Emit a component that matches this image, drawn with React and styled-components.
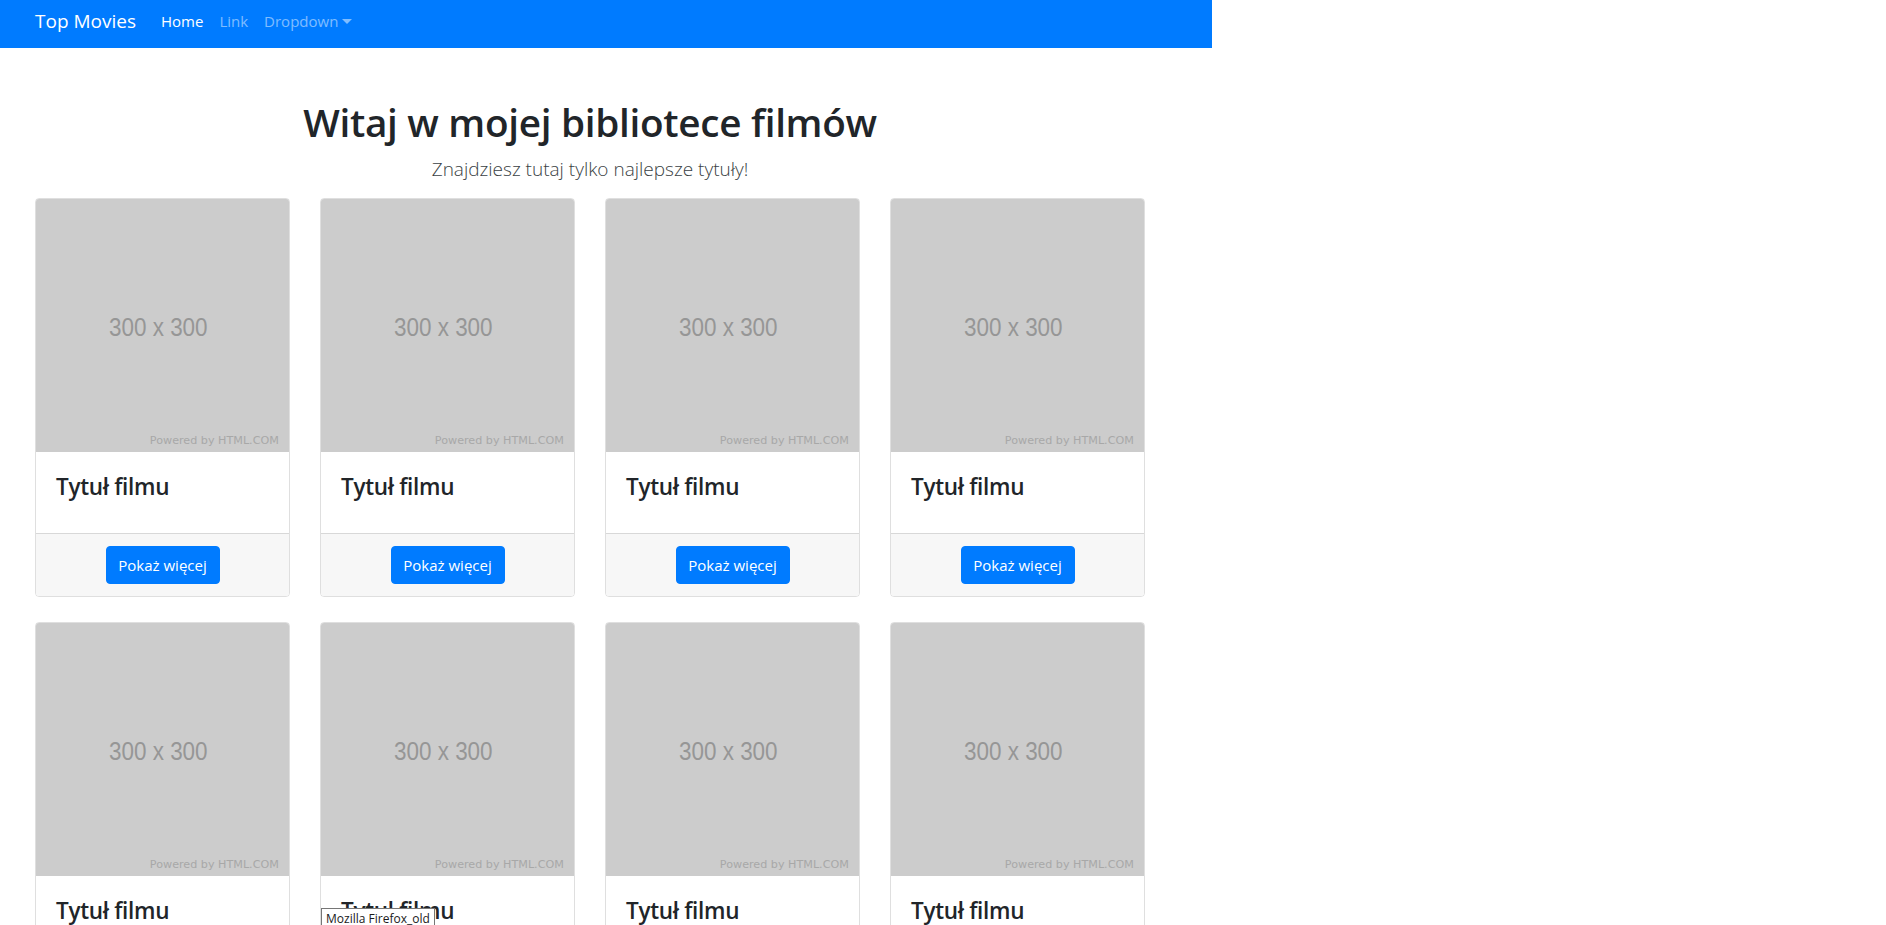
import React from "react";
import styled, { createGlobalStyle } from "styled-components";

const GlobalStyle = createGlobalStyle`
  html, body { margin: 0; padding: 0; background: #fff; }
  body {
    font-family: "Open Sans", "Noto Sans", sans-serif;
    color: #212529;
    overflow: hidden;
  }
  * { box-sizing: border-box; }
`;

const Page = styled.div`
  width: 1212px;
  position: relative;
`;

const Navbar = styled.nav`
  height: 48px;
  background: #007bff;
  display: flex;
  align-items: center;
  padding: 0 0 6px 35px;
`;

const Brand = styled.a`
  color: #fff;
  font-size: 19px;
  margin-right: 17px;
  text-decoration: none;
  line-height: 1;
`;

const NavList = styled.ul`
  display: flex;
  list-style: none;
  margin: 0;
  padding: 0;
`;

const NavLink = styled.a`
  display: flex;
  align-items: center;
  padding: 0 8px;
  font-size: 15px;
  color: ${(p) => (p.$active ? "#fff" : "rgba(255,255,255,0.5)")};
  text-decoration: none;
`;

const Caret = styled.span`
  display: inline-block;
  margin-left: 4px;
  border-top: 5px solid currentColor;
  border-left: 5px solid transparent;
  border-right: 5px solid transparent;
  margin-top: 1px;
`;

const Content = styled.main`
  padding: 0 35px;
  width: 1180px;
`;

const Header = styled.header`
  text-align: center;
  padding-top: 50px;
  margin-bottom: 14px;
`;

const Title = styled.h1`
  margin: 0;
  font-size: 38.7px;
  font-weight: 600;
  line-height: 48px;
  letter-spacing: -0.3px;
`;

const Lead = styled.p`
  margin: 8px 0 0;
  font-size: 19px;
  font-weight: 300;
  line-height: 30px;
  color: #3a3f44;
`;

const Grid = styled.div`
  display: grid;
  grid-template-columns: repeat(4, 255px);
  column-gap: 30px;
  row-gap: 25px;
`;

const Card = styled.div`
  border: 1px solid rgba(0, 0, 0, 0.125);
  border-radius: 4px;
  overflow: hidden;
  display: flex;
  flex-direction: column;
`;

const Placeholder = styled.svg`
  display: block;
  width: 253px;
  height: 253px;
`;

const CardBody = styled.div`
  padding: 20px 20px;
`;

const CardTitle = styled.h3`
  margin: 0 0 11px;
  font-size: 22.5px;
  font-weight: 600;
  line-height: 30px;
  letter-spacing: -0.3px;
`;

const CardFooter = styled.div`
  background: #f7f7f7;
  border-top: 1px solid rgba(0, 0, 0, 0.125);
  padding: 12px;
  display: flex;
  justify-content: center;
`;

const Button = styled.button`
  background: #007bff;
  color: #fff;
  border: 1px solid #007bff;
  border-radius: 4px;
  height: 38px;
  width: 114px;
  font-family: inherit;
  font-size: 15px;
  padding: 0;
  cursor: pointer;
`;

const Tooltip = styled.div`
  position: absolute;
  left: 321px;
  top: 908px;
  background: #fff;
  border: 1px solid #767676;
  padding: 1px 4px 2px;
  font-size: 12px;
  color: #1a1a1a;
  white-space: nowrap;
`;

function PlaceholderImage() {
  return (
    <Placeholder viewBox="0 0 300 300" preserveAspectRatio="none">
      <rect width="300" height="300" fill="#cccccc" />
      <text
        x="145"
        y="162"
        textAnchor="middle"
        fontFamily="Liberation Sans, Arial, sans-serif"
        fontSize="30"
        fill="#969696"
        textLength="117"
        lengthAdjust="spacingAndGlyphs"
      >
        300 x 300
      </text>
      <text
        x="288"
        y="291"
        textAnchor="end"
        fontFamily="DejaVu Sans, Verdana, sans-serif"
        fontSize="12.5"
        fill="#a8a8a8"
        textLength="153"
        lengthAdjust="spacingAndGlyphs"
      >
        Powered by HTML.COM
      </text>
    </Placeholder>
  );
}

function MovieCard() {
  return (
    <Card>
      <PlaceholderImage />
      <CardBody>
        <CardTitle>Tytuł filmu</CardTitle>
      </CardBody>
      <CardFooter>
        <Button>Pokaż więcej</Button>
      </CardFooter>
    </Card>
  );
}

export default function App() {
  const movies = Array.from({ length: 8 }, (_, i) => i);
  return (
    <Page>
      <GlobalStyle />
      <Navbar>
        <Brand href="#">Top Movies</Brand>
        <NavList>
          <li>
            <NavLink href="#" $active>
              Home
            </NavLink>
          </li>
          <li>
            <NavLink href="#">Link</NavLink>
          </li>
          <li>
            <NavLink href="#">
              Dropdown
              <Caret />
            </NavLink>
          </li>
        </NavList>
      </Navbar>
      <Content>
        <Header>
          <Title>Witaj w mojej bibliotece filmów</Title>
          <Lead>Znajdziesz tutaj tylko najlepsze tytuły!</Lead>
        </Header>
        <Grid>
          {movies.map((m) => (
            <MovieCard key={m} />
          ))}
        </Grid>
      </Content>
      <Tooltip>Mozilla Firefox_old</Tooltip>
    </Page>
  );
}
